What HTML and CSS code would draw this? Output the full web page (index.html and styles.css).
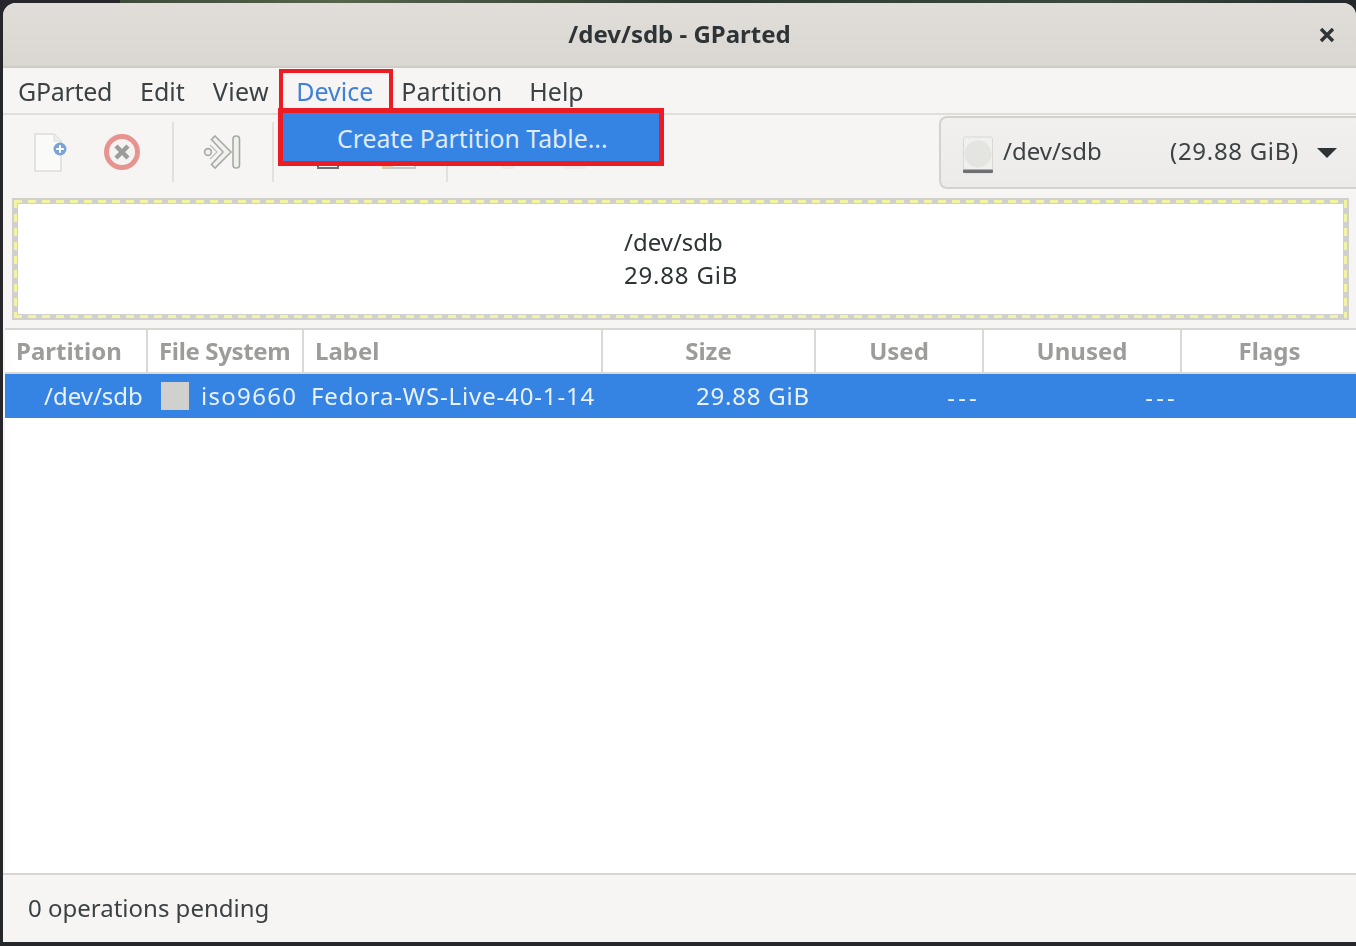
FILE: index.html
```html
<!DOCTYPE html>
<html lang="en">
<head>
<meta charset="utf-8">
<title>/dev/sdb - GParted</title>
<link rel="stylesheet" href="styles.css">
</head>
<body>
<div class="window">
  <header class="titlebar">
    <span class="title">/dev/sdb - GParted</span>
    <svg class="close" width="18" height="18" viewBox="0 0 18 18"><path d="M3 3l12 12M15 3L3 15" stroke="#2e3436" stroke-width="3.400" fill="none"/></svg>
  </header>
  <nav class="menubar">
    <span class="menu-item m-first">GParted</span>
    <span class="menu-item">Edit</span>
    <span class="menu-item m-view">View</span>
    <span class="menu-item active">Device</span>
    <span class="menu-item">Partition</span>
    <span class="menu-item m-help">Help</span>
  </nav>
  <div class="toolbar">
    <svg class="tool tool-new" width="36" height="42" viewBox="0 0 36 42">
      <path d="M2 2h19l7 7v30H2z" fill="#fafaf9" stroke="#dddcd9" stroke-width="1.500"/>
      <path d="M21 2v7h7" fill="#eeeeec" stroke="#dddcd9"/>
      <circle cx="27" cy="17" r="6.500" fill="#7ba3d8"/>
      <path d="M23.200 17h7.600M27 13.200v7.600" stroke="#fff" stroke-width="2"/>
    </svg>
    <svg class="tool tool-cancel" width="38" height="38" viewBox="0 0 38 38">
      <circle cx="19" cy="19" r="15.500" fill="#f4f3f1" stroke="#e79491" stroke-width="5"/>
      <path d="M13 13l12 12M25 13L13 25" stroke="#9c9c99" stroke-width="4.500"/>
    </svg>
    <i class="sep sep-a"></i>
    <svg class="tool tool-apply" width="40" height="38" viewBox="0 0 40 38">
      <path d="M12 3l16 16-16 16-3.500-3.500L20 19 8.500 6.500z" fill="#f0f0ed" stroke="#a8a8a4" stroke-width="1.600"/>
      <path d="M7 12l7 7-7 7" fill="none" stroke="#c4c4c0" stroke-width="1.500"/>
      <circle cx="5" cy="19" r="3.400" fill="#f0f0ed" stroke="#a8a8a4" stroke-width="1.600"/>
      <rect x="30" y="3" width="6.500" height="32" rx="3" fill="#f0f0ed" stroke="#a8a8a4" stroke-width="1.600"/>
    </svg>
    <i class="sep sep-b"></i>
    <i class="stub stub-a"></i>
    <i class="stub stub-b"></i>
    <i class="sep sep-c"></i>
    <i class="faint faint-a"></i>
    <i class="faint faint-b"></i>
    <div class="combo">
      <svg class="disk" width="32" height="38" viewBox="0 0 32 38">
        <rect x="1.500" y="1" width="29" height="36" rx="2" fill="#f0f0ee" stroke="#d8d8d4"/>
        <circle cx="16" cy="18" r="13.500" fill="#e4e4e1"/>
        <rect x="1" y="33.500" width="30" height="3.500" rx="1" fill="#6f6f74"/>
      </svg>
      <span class="combo-name">/dev/sdb</span>
      <span class="combo-size">(29.88 GiB)</span>
      <i class="caret"></i>
    </div>
  </div>
  <div class="graph-wrap">
    <div class="graph">
      <div class="graph-inner">
        <span>/dev/sdb</span>
        <span class="wide">29.88 GiB</span>
      </div>
    </div>
  </div>
  <div class="table">
    <div class="thead">
      <span class="th">Partition</span>
      <span class="th th-fs">File System</span>
      <span class="th">Label</span>
      <span class="th center">Size</span>
      <span class="th center">Used</span>
      <span class="th center">Unused</span>
      <span class="th center last">Flags</span>
    </div>
    <div class="trow">
      <span class="td dev">/dev/sdb</span>
      <span class="td fs"><i class="swatch"></i><span class="iso">iso9660</span></span>
      <span class="td lab">Fedora-WS-Live-40-1-14</span>
      <span class="td right wide">29.88 GiB</span>
      <span class="td right dashes">---</span>
      <span class="td right dashes">---</span>
      <span class="td"></span>
    </div>
  </div>
  <footer class="status">0 operations pending</footer>

  <div class="hl-device"></div>
  <div class="popup"><span>Create Partition Table...</span></div>
</div>
</body>
</html>
```
FILE: styles.css
```css
* { box-sizing: border-box; }
html, body { margin: 0; height: 100%; }
body {
  padding: 3px 0 3px 3px;
  overflow: hidden;
  background:
    linear-gradient(90deg, #26262c 0, #26262c 120px, #3d4a38 120px, #56644c 340px, #2e3a32 700px, #3b4a3c 1100px, #23282c 1356px) 0 0 / 100% 3px no-repeat,
    #25272b;
  font-family: "Noto Sans", sans-serif;
  font-size: 24px;
  color: #2e3436;
}
.window {
  position: relative;
  height: 939px;
  display: flex;
  flex-direction: column;
  background: #f6f5f4;
  border-radius: 13px 13px 0 0;
  overflow: hidden;
  filter: blur(0.5px);
}
.titlebar {
  height: 65px;
  flex: none;
  display: flex;
  align-items: center;
  justify-content: center;
  position: relative;
  background: linear-gradient(#e1deda, #dad7d2);
  border-bottom: 2px solid #cfcbc5;
}
.title { font-weight: 700; margin-top: -2px; color: #2e3436; }
.close { position: absolute; right: 20px; top: 23px; }
.menubar {
  height: 47px;
  flex: none;
  display: flex;
  align-items: center;
  gap: 28px;
  padding: 0 0 0 15px;
  border-bottom: 2px solid #e0dedb;
  color: #3c4244;
  font-size: 25px;
}
.m-first { letter-spacing: -0.3px; }
.m-view { letter-spacing: 0.4px; }
.m-help { margin-left: -1px; }
.active { color: #3f80d8; margin-left: -1px; }
.toolbar {
  height: 83px;
  flex: none;
  display: flex;
  align-items: flex-start;
  position: relative;
}
.tool { flex: none; }
.tool-new { margin: 17px 0 0 30px; }
.tool-cancel { margin: 18px 0 0 34px; }
.sep { flex: none; width: 2px; height: 60px; margin-top: 7px; background: #e3e1de; }
.sep-a { margin-left: 31px; }
.tool-apply { margin: 18px 0 0 29px; }
.sep-b { margin-left: 29px; }
.stub { flex: none; height: 5px; margin-top: 49px; border: 2px solid #6f6f6f; border-top: 0; background: #fff; }
.stub-a { width: 22px; margin-left: 43px; }
.stub-b { width: 34px; margin-left: 43px; border-color: #c8c8c4; border-left: 11px solid #e2cfaa; }
.sep-c { margin-left: 30px; }
.faint { flex: none; height: 3px; margin-top: 51px; border-radius: 0 0 8px 8px; }
.faint-a { width: 14px; margin-left: 53px; background: #eeece9; }
.faint-b { width: 24px; margin-left: 48px; background: #eeedeb; }
.combo {
  margin: 1px 0 0 auto;
  width: 417px;
  height: 73px;
  display: flex;
  align-items: center;
  background: linear-gradient(#f1f0ee, #ecebe9);
  border: 2px solid #d5d2cd;
  border-right: 0;
  border-radius: 8px 0 0 8px;
  color: #3c4244;
}
.disk { margin-left: 21px; margin-top: 4px; flex: none; }
.combo-name { margin-left: 9px; width: 167px; margin-top: -4px; }
.combo-size { width: 147px; letter-spacing: 0.7px; margin-top: -4px; }
.caret {
  border: 10px solid transparent;
  border-top: 10px solid #2e3436;
  border-bottom: 0;
}
.graph-wrap { flex: none; height: 130px; padding: 0 0 0 9px; }
.graph {
  width: 1337px;
  height: 122px;
  padding: 6px;
  background:
    repeating-linear-gradient(90deg, #f3f3a0 0 8px, transparent 8px 14px) 2px 2px / calc(100% - 4px) 3px no-repeat,
    repeating-linear-gradient(90deg, #f3f3a0 0 8px, transparent 8px 14px) 2px calc(100% - 2px) / calc(100% - 4px) 3px no-repeat,
    repeating-linear-gradient(180deg, #f3f3a0 0 8px, transparent 8px 14px) 2px 2px / 3px calc(100% - 4px) no-repeat,
    repeating-linear-gradient(180deg, #f3f3a0 0 8px, transparent 8px 14px) calc(100% - 2px) 2px / 3px calc(100% - 4px) no-repeat,
    #d0d0ce;
}
.graph-inner {
  height: 110px;
  background: #fff;
  display: flex;
  flex-direction: column;
  align-items: center;
  justify-content: center;
  line-height: 33px;
  color: #2e3436;
  padding: 0 0 2px 2px;
}
.graph-inner span { display: block; width: 115px; }
.graph-inner .wide, .wide { letter-spacing: 0.8px; }
.table {
  flex: 1;
  margin-left: 2px;
  background: #fff;
  border-top: 2px solid #d9d5d0;
}
.thead, .trow {
  display: grid;
  grid-template-columns: 143px 156px 299px 213px 168px 198px 175px;
}
.thead { height: 44px; }
.th {
  display: flex;
  align-items: center;
  padding: 0 0 2px 11px;
  font-weight: 700;
  color: #9c9c9a;
  border-right: 2px solid #dcd8d3;
  border-bottom: 2px solid #dcd8d3;
}
.th-fs { letter-spacing: -0.35px; }
.th.center { justify-content: center; padding: 0 0 2px; }
.th.last { border-right: 0; }
.trow { height: 44px; background: #3584e4; color: #e9f1fc; }
.td { display: flex; align-items: center; white-space: nowrap; padding-bottom: 2px; }
.dev { padding-left: 39px; }
.fs { padding-left: 13px; gap: 12px; }
.iso { letter-spacing: 1.300px; }
.lab { padding-left: 7px; letter-spacing: 0.85px; }
.swatch { width: 28px; height: 28px; background: #d0d0ce; flex: none; margin-top: 2px; }
.right { justify-content: flex-end; padding-right: 6px; }
.dashes { letter-spacing: 3.200px; padding-right: 4px; padding-top: 2px; }
.status {
  height: 69px;
  flex: none;
  display: flex;
  align-items: center;
  padding: 0 0 2px 25px;
  background: #f6f5f4;
  border-top: 2px solid #d9d5d0;
  color: #3c4244;
}
.hl-device {
  position: absolute;
  left: 276px;
  top: 66px;
  width: 114px;
  height: 46px;
  border: 4px solid #ed1c24;
  border-bottom-width: 0;
}
.popup {
  position: absolute;
  left: 275px;
  top: 105px;
  width: 386px;
  height: 58px;
  background: #3584e4;
  border: 5px solid #ed1c24;
  display: flex;
  align-items: center;
  padding: 2px 0 0 54px;
  color: #dfeafa;
  font-size: 24.800px;
}
```
